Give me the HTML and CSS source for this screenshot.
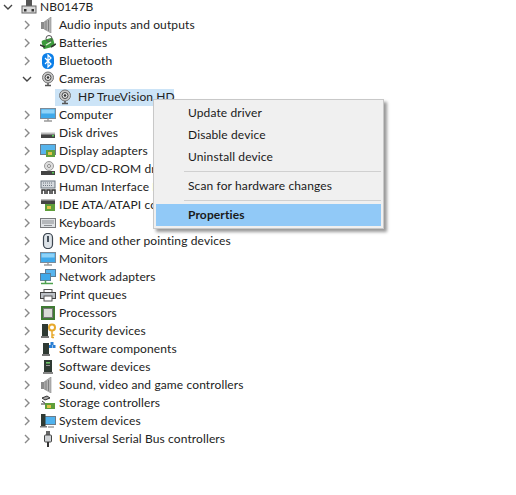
FILE: index.html
```html
<!DOCTYPE html>
<html lang="en">
<head>
<meta charset="utf-8">
<title>Device Manager</title>
<link rel="stylesheet" href="styles.css">
</head>
<body>
<svg class="defs" width="0" height="0">
  <symbol id="chev-r" viewBox="0 0 10 10"><path d="M3 1l4 4-4 4" fill="none" stroke="#8a8a8a" stroke-width="1.4"/></symbol>
  <symbol id="chev-d" viewBox="0 0 10 10"><path d="M1 3l4 4 4-4" fill="none" stroke="#444" stroke-width="1.4"/></symbol>
  <symbol id="cam" viewBox="0 0 16 16"><circle cx="8" cy="6.5" r="5.5" fill="#c9c9c9" stroke="#777"/><circle cx="8" cy="6.5" r="3" fill="#eee" stroke="#444"/><circle cx="8" cy="6.5" r="1.3" fill="#333"/><path d="M5 14.5h6M8 12v2" stroke="#555" stroke-width="1.5"/></symbol>
  <symbol id="mon" viewBox="0 0 16 16"><rect x="0.5" y="1.5" width="15" height="10" fill="#3fa9ea" stroke="#7c8b98"/><rect x="1.5" y="2.5" width="13" height="4" fill="#8fd3f8"/><path d="M4 14h8M8 12v2" stroke="#9a9a9a" stroke-width="1.4"/></symbol>
  <symbol id="disk" viewBox="0 0 16 16"><rect x="1" y="9" width="14" height="4" fill="#444"/><rect x="1" y="7.5" width="14" height="2" fill="#bbb"/><rect x="12" y="10" width="2" height="1.5" fill="#5c5"/></symbol>
  <symbol id="spk" viewBox="0 0 16 16"><rect x="1" y="5" width="3" height="7" fill="#8a8a8a"/><path d="M4 5l7-5v16l-7-4z" fill="#b4b4b4" stroke="#8a8a8a" stroke-width=".6"/><path d="M6 4v9M8.500 3v11" stroke="#7d7d7d"/></symbol>
  <symbol id="tower" viewBox="0 0 16 16"><rect x="4" y="1" width="8" height="12" fill="#2f3a33"/><rect x="6" y="3" width="4" height="1.6" fill="#6fc36a"/><rect x="6" y="6" width="4" height="1" fill="#999"/><rect x="3" y="13" width="10" height="2" fill="#888"/></symbol>
</svg>

<main class="tree">
  <div class="row root"><svg class="chev"><use href="#chev-d"/></svg>
    <svg class="ico" viewBox="0 0 16 16"><rect x="5" y="0" width="6" height="7" fill="#555"/><rect x="1" y="7" width="14" height="7" fill="#d8d8d8" stroke="#666"/><rect x="3" y="10" width="2.5" height="2.5" fill="#333"/><rect x="10.500" y="10" width="2.500" height="2.500" fill="#333"/></svg><span>NB0147B</span></div>
  <div class="row"><svg class="chev"><use href="#chev-r"/></svg><svg class="ico"><use href="#spk"/></svg><span>Audio inputs and outputs</span></div>
  <div class="row"><svg class="chev"><use href="#chev-r"/></svg>
    <svg class="ico" viewBox="0 0 16 16"><rect x="2" y="4" width="12" height="9" rx="2" fill="#3c9a3c" transform="rotate(-15 8 8)"/><circle cx="9" cy="3.500" r="3" fill="none" stroke="#555"/><path d="M0 10l5 2M11 12l5-3" stroke="#333" stroke-width="1.500"/><path d="M6 10l5-3" stroke="#dff3d8" stroke-width="1.400"/></svg><span>Batteries</span></div>
  <div class="row"><svg class="chev"><use href="#chev-r"/></svg>
    <svg class="ico" viewBox="0 0 16 16"><rect x="2" y="0" width="12" height="16" rx="5.500" fill="#0c7fe8"/><path d="M5 5l6 6-3 3V2l3 3-6 6" fill="none" stroke="#fff" stroke-width="1.200"/></svg><span>Bluetooth</span></div>
  <div class="row"><svg class="chev"><use href="#chev-d"/></svg><svg class="ico"><use href="#cam"/></svg><span>Cameras</span></div>
  <div class="row child"><div class="selected"><svg class="ico"><use href="#cam"/></svg><span>HP TrueVision HD</span></div></div>
  <div class="row"><svg class="chev"><use href="#chev-r"/></svg><svg class="ico"><use href="#mon"/></svg><span>Computer</span></div>
  <div class="row"><svg class="chev"><use href="#chev-r"/></svg><svg class="ico"><use href="#disk"/></svg><span>Disk drives</span></div>
  <div class="row"><svg class="chev"><use href="#chev-r"/></svg>
    <svg class="ico" viewBox="0 0 16 16"><rect x="0.500" y="1.500" width="15" height="10" fill="#56b4ec" stroke="#6b7b88"/><rect x="6" y="7" width="9" height="7" fill="#5f9e3a"/><rect x="8" y="9" width="4" height="3" fill="#e2c34a"/></svg><span>Display adapters</span></div>
  <div class="row"><svg class="chev"><use href="#chev-r"/></svg>
    <svg class="ico" viewBox="0 0 16 16"><circle cx="9" cy="5" r="4.500" fill="#ddd" stroke="#999"/><circle cx="9" cy="5" r="1.500" fill="#fff" stroke="#888"/><rect x="1" y="10" width="14" height="4" fill="#444"/><rect x="12" y="11" width="2" height="1.500" fill="#5c5"/></svg><span>DVD/CD-ROM drives</span></div>
  <div class="row"><svg class="chev"><use href="#chev-r"/></svg>
    <svg class="ico" viewBox="0 0 16 16"><rect x="1" y="2" width="14" height="7" fill="#d5d9de" stroke="#6d7680"/><path d="M3 4h10M3 6.500h10" stroke="#6d7680" stroke-dasharray="1 1"/><path d="M2 15v-4h3v4M7 15v-4h3v4M12 15v-4h3v4" fill="none" stroke="#333" stroke-width="1.500"/></svg><span>Human Interface Devices</span></div>
  <div class="row"><svg class="chev"><use href="#chev-r"/></svg>
    <svg class="ico" viewBox="0 0 16 16"><rect x="1" y="3" width="14" height="4" fill="#444"/><rect x="1" y="2" width="14" height="1.500" fill="#bbb"/><rect x="5" y="7" width="10" height="7" fill="#5f9e3a"/><rect x="7" y="9" width="4" height="3" fill="#e2c34a"/></svg><span>IDE ATA/ATAPI controllers</span></div>
  <div class="row"><svg class="chev"><use href="#chev-r"/></svg>
    <svg class="ico" viewBox="0 0 16 16"><rect x="0.500" y="3.500" width="15" height="9" fill="#dfe2e5" stroke="#77797c"/><path d="M2 6h12M2 8h12M4 10.500h8" stroke="#8b8e92"/></svg><span>Keyboards</span></div>
  <div class="row"><svg class="chev"><use href="#chev-r"/></svg>
    <svg class="ico" viewBox="0 0 16 16"><rect x="3.500" y="0.500" width="9" height="15" rx="4" fill="#dde3e8" stroke="#3d4650" stroke-width="1.200"/><rect x="7" y="3" width="2" height="6" fill="#48525c"/></svg><span>Mice and other pointing devices</span></div>
  <div class="row"><svg class="chev"><use href="#chev-r"/></svg><svg class="ico"><use href="#mon"/></svg><span>Monitors</span></div>
  <div class="row"><svg class="chev"><use href="#chev-r"/></svg>
    <svg class="ico" viewBox="0 0 16 16"><rect x="5.500" y="0.500" width="10" height="7" fill="#58b5ee" stroke="#5c7d96"/><rect x="0.500" y="4.500" width="10" height="7" fill="#3fa9ea" stroke="#5c7d96"/><path d="M1 14.500h12M5.500 11.500v3" stroke="#4fa24f" stroke-width="1.500"/></svg><span>Network adapters</span></div>
  <div class="row"><svg class="chev"><use href="#chev-r"/></svg>
    <svg class="ico" viewBox="0 0 16 16"><rect x="4" y="2.500" width="8" height="3" fill="#fff" stroke="#555"/><rect x="0.500" y="5.500" width="15" height="6" fill="#bcc1c6" stroke="#444"/><rect x="4" y="9" width="8" height="5" fill="#fff" stroke="#555"/></svg><span>Print queues</span></div>
  <div class="row"><svg class="chev"><use href="#chev-r"/></svg>
    <svg class="ico" viewBox="0 0 16 16"><rect x="1" y="1" width="14" height="14" fill="#3f7a33"/><rect x="3.500" y="3.500" width="9" height="9" fill="#d9dcd6" stroke="#777"/></svg><span>Processors</span></div>
  <div class="row"><svg class="chev"><use href="#chev-r"/></svg>
    <svg class="ico" viewBox="0 0 16 16"><rect x="2" y="1" width="6" height="12" fill="#2f3a33"/><rect x="1" y="13" width="8" height="2" fill="#777"/><circle cx="12" cy="4.500" r="3" fill="none" stroke="#e7a92c" stroke-width="2"/><path d="M12 7v8M12 12h2.500M12 14.500h2" stroke="#e7a92c" stroke-width="1.500"/></svg><span>Security devices</span></div>
  <div class="row"><svg class="chev"><use href="#chev-r"/></svg>
    <svg class="ico" viewBox="0 0 16 16"><rect x="3" y="2" width="6" height="11" fill="#2f3a33"/><rect x="2" y="13" width="8" height="2" fill="#777"/><rect x="9" y="4" width="3" height="3" fill="#2b7fd4"/><rect x="12.500" y="4" width="3" height="3" fill="#2b7fd4"/><rect x="10.500" y="1" width="3" height="3" fill="#2b7fd4"/></svg><span>Software components</span></div>
  <div class="row"><svg class="chev"><use href="#chev-r"/></svg><svg class="ico"><use href="#tower"/></svg><span>Software devices</span></div>
  <div class="row"><svg class="chev"><use href="#chev-r"/></svg><svg class="ico"><use href="#spk"/></svg><span>Sound, video and game controllers</span></div>
  <div class="row"><svg class="chev"><use href="#chev-r"/></svg>
    <svg class="ico" viewBox="0 0 16 16"><path d="M2 3l5-2 3 2-5 2zM2 6l4 3M1 9h4" fill="#aaa" stroke="#333"/><rect x="5" y="8" width="10" height="6" fill="#5f9e3a"/><rect x="7" y="10" width="4" height="3" fill="#e2c34a"/></svg><span>Storage controllers</span></div>
  <div class="row"><svg class="chev"><use href="#chev-r"/></svg>
    <svg class="ico" viewBox="0 0 16 16"><rect x="4" y="3.500" width="11.500" height="8" fill="#4fb2ee" stroke="#6b7b88"/><rect x="1" y="1" width="4.500" height="12" fill="#2f3a33"/><rect x="0" y="13" width="7" height="1.500" fill="#777"/><path d="M8 14h6" stroke="#999" stroke-width="1.400"/></svg><span>System devices</span></div>
  <div class="row"><svg class="chev"><use href="#chev-r"/></svg>
    <svg class="ico" viewBox="0 0 16 16"><rect x="6" y="0" width="4" height="4" fill="#666"/><rect x="4.500" y="4" width="7" height="7" rx="1" fill="#cfd2d5" stroke="#444"/><path d="M8 11v5" stroke="#333" stroke-width="2"/></svg><span>Universal Serial Bus controllers</span></div>
</main>

<div class="menu">
  <div class="item">Update driver</div>
  <div class="item">Disable device</div>
  <div class="item">Uninstall device</div>
  <hr class="sep">
  <div class="item">Scan for hardware changes</div>
  <hr class="sep">
  <div class="item active">Properties</div>
</div>
</body>
</html>
```
FILE: styles.css
```css
html, body {
  margin: 0;
  padding: 0;
  background: #fff;
}
body {
  width: 516px;
  height: 495px;
  overflow: hidden;
  position: relative;
  font-family: "Lato", "Noto Sans", sans-serif;
  font-size: 12px;
  letter-spacing: 0.12px;
  color: #222;
}
.defs {
  position: absolute;
}
.tree {
  margin-top: -2px;
  padding-left: 22px;
}
.row {
  display: flex;
  align-items: center;
  height: 18px;
  line-height: 14px;
  white-space: nowrap;
}
.row.root {
  margin-left: -19px;
}
.chev {
  width: 10px;
  height: 10px;
  margin-right: 8px;
  flex: none;
}
.ico {
  width: 16px;
  height: 16px;
  margin-right: 3px;
  flex: none;
}
.row.child {
  padding-left: 33px;
}
.selected {
  display: flex;
  align-items: center;
  height: 17px;
  width: 119px;
  padding-left: 2px;
  box-sizing: border-box;
  background: #cce4f7;
}
.selected .ico {
  margin-right: 5px;
}
.menu {
  position: absolute;
  left: 153px;
  top: 99px;
  width: 231px;
  box-sizing: border-box;
  padding: 2px;
  background: #f0f0f0;
  border: 1px solid #c8c8c8;
  box-shadow: 3px 3px 3px rgba(0, 0, 0, 0.4);
  color: #1a1a1a;
}
.item {
  height: 22px;
  line-height: 22px;
  padding-left: 32px;
}
.sep {
  border: 0;
  border-top: 1px solid #d0d0d0;
  margin: 3px 0 3px 28px;
}
.item.active {
  background: #91c9f7;
  font-weight: 700;
}
```
